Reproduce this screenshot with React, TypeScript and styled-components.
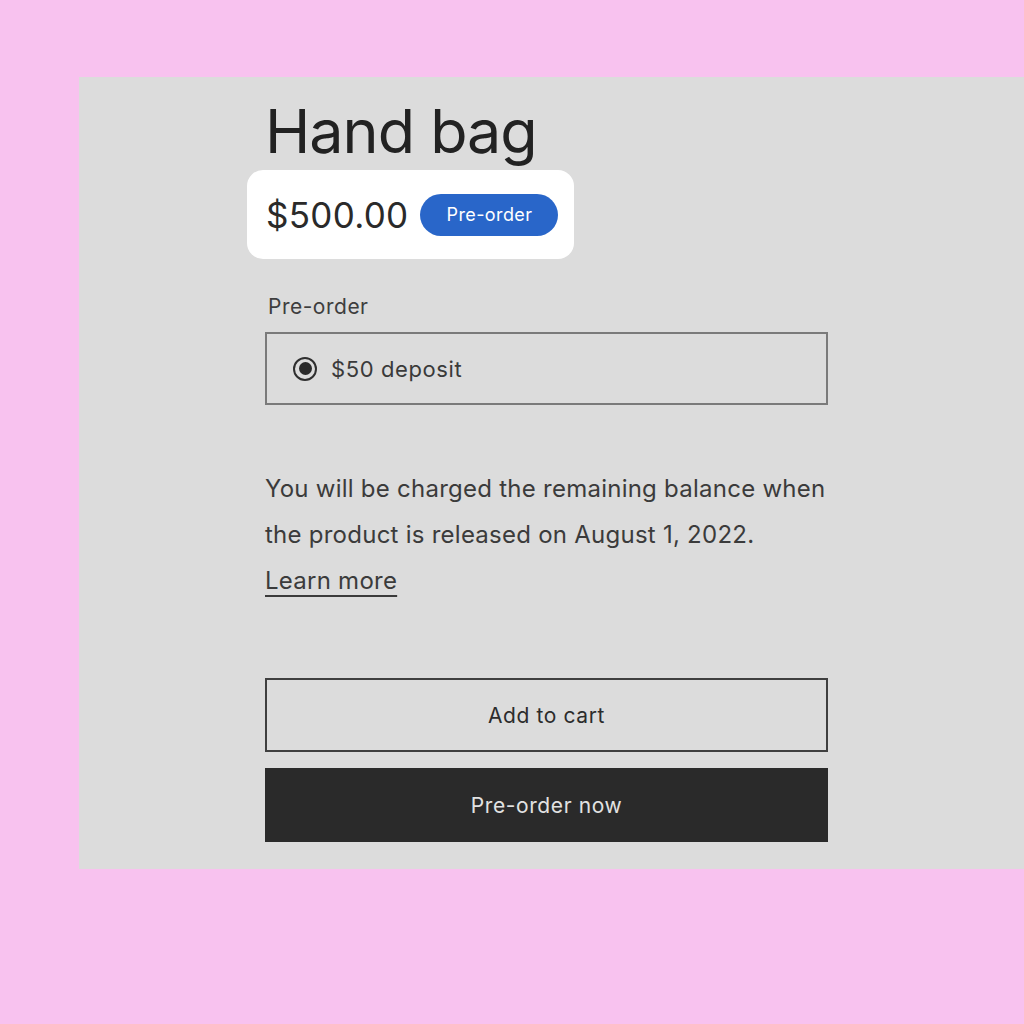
import React from 'react';
import styled, { createGlobalStyle } from 'styled-components';

const GlobalStyle = createGlobalStyle`
  html, body {
    margin: 0;
    padding: 0;
    background: #f8c2ef;
  }
  body {
    font-family: Inter, "Noto Sans", "Liberation Sans", sans-serif;
  }
`;

const Page = styled.div`
  width: 1024px;
  height: 1024px;
  padding: 77px 0 0 79px;
  box-sizing: border-box;
  overflow: hidden;
`;

const Panel = styled.section`
  height: 792px;
  background: #dcdcdc;
  padding: 0 0 0 186px;
  box-sizing: border-box;
`;

const Column = styled.div`
  width: 563px;
  display: flex;
  flex-direction: column;
`;

const Title = styled.h1`
  margin: 16px 0 0;
  font-size: 61px;
  font-weight: 400;
  line-height: 76px;
  color: #222;
  letter-spacing: -1px;
`;

const PriceRow = styled.div`
  align-self: flex-start;
  margin: 1px 0 0 -18px;
  height: 89px;
  padding: 0 16px 0 19px;
  display: flex;
  align-items: center;
  gap: 12px;
  background: #fff;
  border-radius: 16px;
  box-sizing: border-box;
`;

const Price = styled.span`
  font-size: 35px;
  color: #2a2a2a;
  letter-spacing: 0.3px;
`;

const Badge = styled.span`
  display: inline-flex;
  align-items: center;
  justify-content: center;
  width: 138px;
  height: 42px;
  border-radius: 21px;
  background: #2966c9;
  color: #fff;
  font-size: 18px;
  letter-spacing: 0.4px;
`;

const FieldLabel = styled.div`
  margin: 36px 0 0 3px;
  font-size: 21px;
  line-height: 24px;
  color: #3e3e3e;
  letter-spacing: 0.5px;
`;

const OptionBox = styled.label`
  margin-top: 13px;
  height: 73px;
  display: flex;
  align-items: center;
  gap: 14px;
  padding-left: 26px;
  border: 2px solid #7a7a7a;
  box-sizing: border-box;
  font-size: 22px;
  color: #3a3a3a;
  letter-spacing: 0.6px;
`;

const Radio = styled.span`
  width: 24px;
  height: 24px;
  border: 2px solid #2f2f2f;
  border-radius: 50%;
  box-sizing: border-box;
  display: flex;
  align-items: center;
  justify-content: center;

  &::after {
    content: '';
    width: 13px;
    height: 13px;
    border-radius: 50%;
    background: #2a2a2a;
  }
`;

const Note = styled.p`
  margin: 61px 0 0;
  font-size: 24px;
  line-height: 46px;
  color: #3b3b3b;
  letter-spacing: 0.25px;
`;

const LearnMore = styled.a`
  color: #3b3b3b;
  text-decoration: underline;
  text-decoration-thickness: 2px;
  text-underline-offset: 6px;
`;

const Button = styled.button<{ $dark?: boolean }>`
  height: 74px;
  width: 100%;
  margin-top: ${p => (p.$dark ? '16px' : '74px')};
  border: 2px solid ${p => (p.$dark ? '#2a2a2a' : '#3f3f3f')};
  background: ${p => (p.$dark ? '#2a2a2a' : 'transparent')};
  color: ${p => (p.$dark ? '#e2e2e2' : '#2c2c2c')};
  font-family: inherit;
  font-size: 21px;
  letter-spacing: 0.6px;
  cursor: pointer;
`;

export default function App() {
  return (
    <>
      <GlobalStyle />
      <Page>
        <Panel>
          <Column>
            <Title>Hand bag</Title>
            <PriceRow>
              <Price>$500.00</Price>
              <Badge>Pre-order</Badge>
            </PriceRow>
            <FieldLabel>Pre-order</FieldLabel>
            <OptionBox>
              <Radio />
              $50 deposit
            </OptionBox>
            <Note>
              You will be charged the remaining balance when the product is released on August 1, 2022.
              <br />
              <LearnMore href="#">Learn more</LearnMore>
            </Note>
            <Button>Add to cart</Button>
            <Button $dark>Pre-order now</Button>
          </Column>
        </Panel>
      </Page>
    </>
  );
}
